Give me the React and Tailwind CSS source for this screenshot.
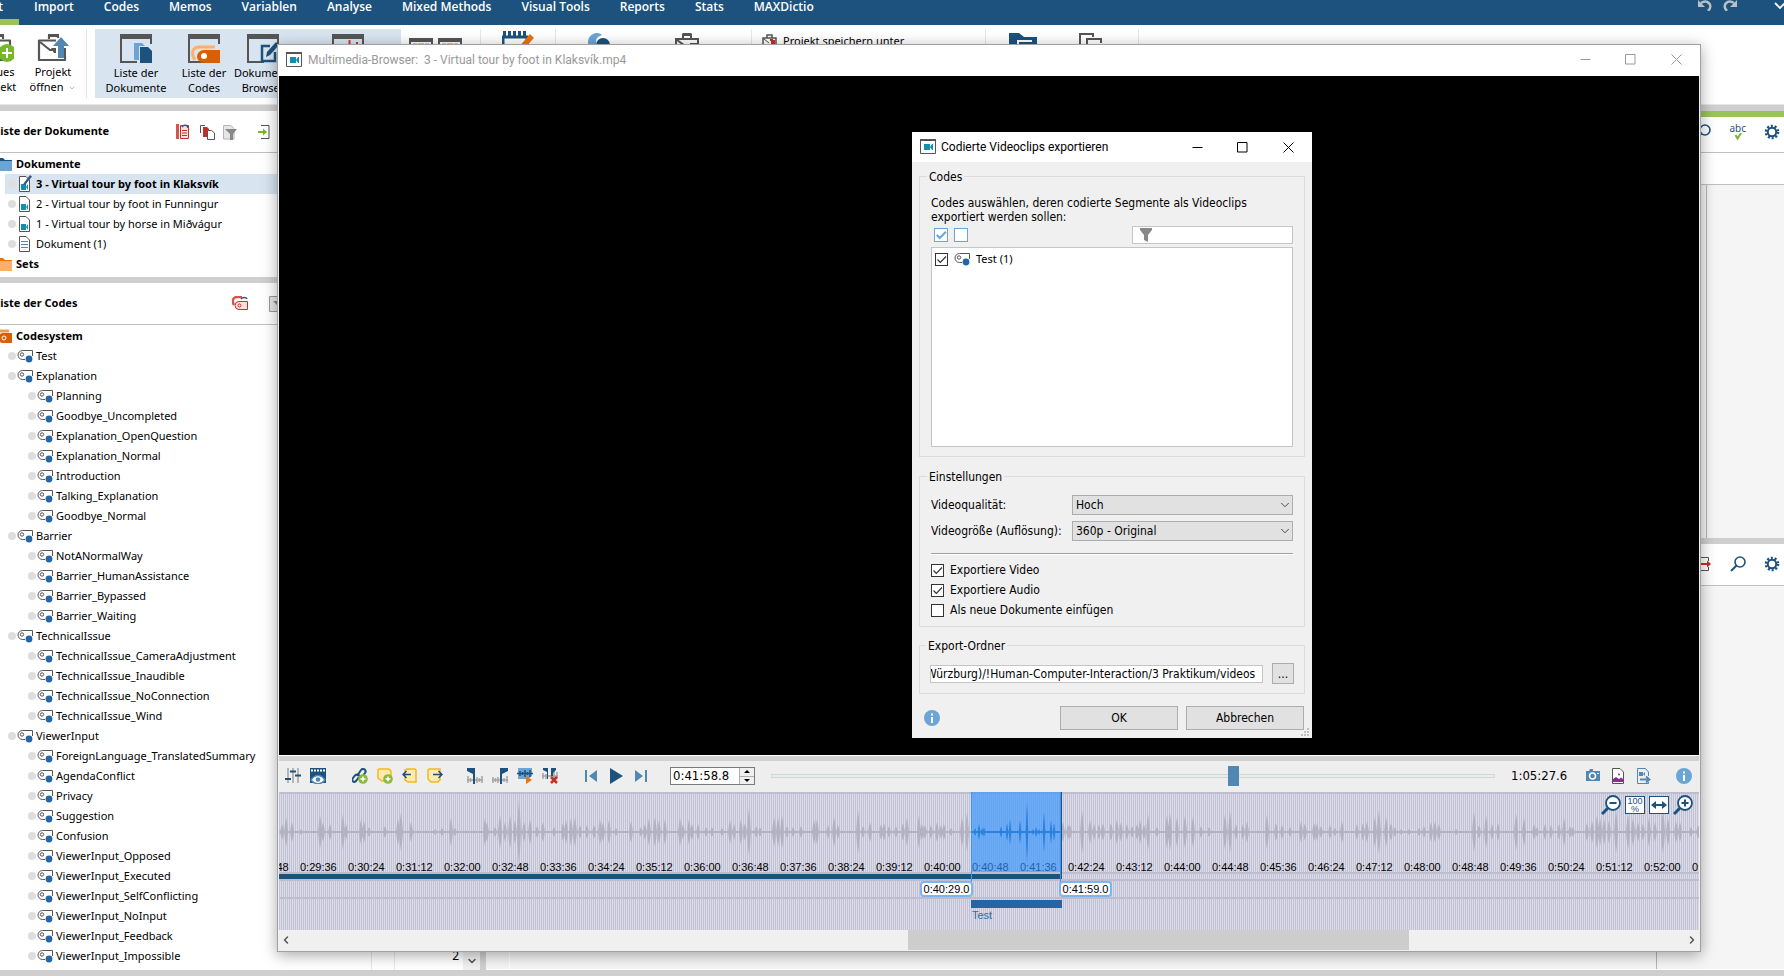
import { useState } from 'react';
import { ChevronDown, ChevronLeft, ChevronRight } from 'lucide-react';

const MENU = ['Import', 'Codes', 'Memos', 'Variablen', 'Analyse', 'Mixed Methods', 'Visual Tools', 'Reports', 'Stats', 'MAXDictio'];

const CODES = [
  ['Test', 0],
  ['Explanation', 0],
  ['Planning', 1],
  ['Goodbye_Uncompleted', 1],
  ['Explanation_OpenQuestion', 1],
  ['Explanation_Normal', 1],
  ['Introduction', 1],
  ['Talking_Explanation', 1],
  ['Goodbye_Normal', 1],
  ['Barrier', 0],
  ['NotANormalWay', 1],
  ['Barrier_HumanAssistance', 1],
  ['Barrier_Bypassed', 1],
  ['Barrier_Waiting', 1],
  ['TechnicalIssue', 0],
  ['TechnicalIssue_CameraAdjustment', 1],
  ['TechnicalIssue_Inaudible', 1],
  ['TechnicalIssue_NoConnection', 1],
  ['TechnicalIssue_Wind', 1],
  ['ViewerInput', 0],
  ['ForeignLanguage_TranslatedSummary', 1],
  ['AgendaConflict', 1],
  ['Privacy', 1],
  ['Suggestion', 1],
  ['Confusion', 1],
  ['ViewerInput_Opposed', 1],
  ['ViewerInput_Executed', 1],
  ['ViewerInput_SelfConflicting', 1],
  ['ViewerInput_NoInput', 1],
  ['ViewerInput_Feedback', 1],
  ['ViewerInput_Impossible', 1],
];

// [x, half height] of the loud spots in the recording
const PEAKS = [
  [3, 8], [7, 15], [13, 10], [22, 3], [41, 17], [44, 10], [51, 8], [64, 18], [67, 8], [82, 13], [85, 11], [90, 5], [106, 6], [119, 13], [122, 20], [132, 10],
  [156, 3], [163, 4], [172, 14], [176, 4], [206, 14], [208, 10], [216, 5], [221, 17], [226, 10], [231, 17], [236, 12], [240, 33], [245, 10], [251, 13], [258, 6], [264, 10],
  [275, 5], [284, 9], [287, 12], [292, 14], [296, 15], [301, 7], [308, 7], [315, 7], [321, 13], [324, 10], [330, 12], [337, 4], [352, 11], [362, 5], [366, 8], [370, 14],
  [376, 15], [380, 12], [386, 13], [401, 14], [404, 8], [410, 13], [413, 8], [419, 8], [427, 5], [433, 5], [443, 4], [451, 12], [455, 8], [462, 13], [466, 9], [470, 24],
  [477, 6], [481, 5], [495, 15], [499, 15], [503, 17], [508, 6], [514, 5], [522, 6], [535, 12], [538, 13], [549, 7], [555, 15], [559, 7], [579, 22], [584, 6], [591, 10],
  [602, 8], [605, 9], [610, 6], [617, 6], [624, 9], [628, 14], [640, 17], [643, 8], [646, 7], [652, 7], [658, 10], [662, 7], [665, 8], [672, 4], [683, 15], [688, 20],
  [784, 10], [789, 8], [791, 7], [803, 22], [811, 12], [815, 8], [820, 8], [824, 9], [832, 9], [838, 13], [842, 10], [848, 8], [853, 6], [858, 8], [861, 12], [865, 7], [869, 18],
  [878, 5], [888, 17], [891, 19], [898, 15], [906, 17], [914, 16], [922, 6], [930, 5], [946, 18], [951, 21], [957, 8], [964, 8], [968, 11], [988, 18], [997, 9], [1003, 7], [1011, 5],
  [1022, 11], [1026, 9], [1035, 9], [1038, 9], [1042, 6], [1051, 7], [1056, 4], [1063, 11], [1078, 8], [1084, 9], [1088, 11], [1096, 16], [1100, 22], [1107, 15], [1112, 9], [1116, 5],
  [1122, 3], [1130, 3], [1140, 4], [1145, 6], [1152, 10], [1156, 11], [1160, 8], [1177, 3], [1195, 21], [1200, 7], [1207, 17], [1213, 8], [1219, 9], [1237, 19], [1245, 14],
  [1255, 8], [1258, 5], [1266, 8], [1272, 7], [1280, 8], [1285, 14], [1291, 6], [1294, 5], [1308, 9], [1313, 11], [1318, 17], [1321, 14], [1325, 13], [1330, 12], [1337, 22], [1349, 18],
  [1354, 14], [1359, 10], [1364, 9], [1370, 15], [1376, 10], [1384, 22], [1389, 14], [1397, 11], [1401, 10], [1412, 5], [1419, 7],
];
const SELECTED_PEAKS = [[4, 4], [8, 8], [11, 4], [13, 5], [30, 6], [36, 9], [39, 13], [49, 12], [56, 30], [62, 3], [65, 5], [68, 3], [73, 20], [80, 12], [83, 9]];

const TIMES = Array.from({ length: 31 }, (_, i) => {
  const s = 28 * 60 + 48 + i * 48;
  const pad = n => String(n).padStart(2, '0');
  return `0:${pad(Math.floor(s / 60))}:${pad(s % 60)}`;
});

const wavePath = (peaks, mid, w) =>
  peaks.map(([x, a]) => `M${x - w} ${mid}L${x - w / 2} ${mid - a * 0.6}L${x} ${mid - a}L${x + w / 2} ${mid - a * 0.6}L${x + w} ${mid}L${x + w / 2} ${mid + a * 0.6}L${x} ${mid + a}L${x - w / 2} ${mid + a * 0.6}Z`).join('');

const Svg = ({ w = 16, h = 16, className = '', children }) => (
  <svg width={w} height={h} viewBox={`0 0 ${w} ${h}`} fill="none" className={`shrink-0 ${className}`} aria-hidden="true">{children}</svg>
);

const CodeIcon = () => (
  <Svg w={16} h={14}>
    <path d="M15.500 7V1.500H5.500a4.500 4.500 0 0 0 0 9H8" stroke="#555" />
    <circle cx="5" cy="5.500" r="1.700" stroke="#555" />
    <circle cx="12" cy="10" r="3.400" fill="#2465a5" />
  </Svg>
);

const VideoWindowIcon = () => (
  <Svg>
    <path d="M.5.500h15v14H.5z" fill="#fff" stroke="#555" />
    <path d="M0 0h16v2H0z" fill="#555" />
    <path d="M4 5h6v6H4zM10 8l2-3h1v6h-1z" fill="#128fb0" />
  </Svg>
);

const DocIcon = ({ kind }) => (
  <Svg w={14} h={18}>
    <path d="M1.500 1.500h6.500l3.500 3.500v11.500h-10z" fill="#fff" stroke="#555" />
    {kind === 'text' ? (
      <path d="M3 6.500h7M3 9.500h7M3 12.500h7" stroke="#5087b3" />
    ) : (
      <path d="M3 9h5v6H3zM8 12l2-3v6z" fill="#128fb0" />
    )}
    {kind === 'edit' && <path d="M5.500 8.500L12 0l2 1.500L7.500 9.500l-2 .5z" fill="#35568c" />}
  </Svg>
);

const FolderIcon = ({ orange }) => (
  <Svg w={16} h={14}>
    <path d="M0 1h7l2 2h7v3H0z" fill={orange ? '#e8760c' : '#1c527d'} />
    <path d="M0 4h16v10H0z" fill={orange ? '#ffb066' : '#6ba5d6'} />
  </Svg>
);

const SearchIcon = () => (
  <Svg>
    <circle cx="10" cy="6" r="5" stroke="#1c527d" strokeWidth="1.600" />
    <path d="M6.500 9.500L1 15" stroke="#1c527d" strokeWidth="2" />
  </Svg>
);

const GearIcon = () => (
  <Svg>
    <circle cx="8" cy="8" r="4.200" stroke="#1c527d" strokeWidth="2" />
    <circle cx="8" cy="8" r="6" stroke="#1c527d" strokeWidth="2.600" strokeDasharray="2 1.770" />
  </Svg>
);

const InfoIcon = () => (
  <Svg>
    <circle cx="8" cy="8" r="8" fill="#6ba5d6" />
    <path d="M7 3.500h2v2H7zM7 7h2v6H7z" fill="#fff" />
  </Svg>
);

const CaseIcon = ({ children }) => (
  <Svg w={32} h={28}>
    <path d="M12 5V1.500h9V5M2 26V6.500h26V26z" stroke="#555" strokeWidth="2.200" strokeLinejoin="round" fill="#fff" />
    <path d="M11 0h11v3H11z" fill="#555" />
    <path d="M3 8l10 8h5" stroke="#555" strokeWidth="2" />
    <path d="M14 14h5v5h-2z" fill="#555" />
    {children}
  </Svg>
);

const PaneIcon = ({ children }) => (
  <Svg w={32} h={29}>
    <path d="M31 10V1H1v27h16" stroke="#555" strokeWidth="2" />
    <path d="M0 2a2 2 0 0 1 2-2h28a2 2 0 0 1 2 2v3H0z" fill="#555" />
    {children}
  </Svg>
);

const IconButton = ({ label, children, className = '' }) => (
  <button type="button" aria-label={label} className={`flex shrink-0 items-center justify-center ${className}`}>{children}</button>
);

const RibbonButton = ({ icon, lines, className }) => (
  <button type="button" className={`flex shrink-0 flex-col items-center gap-[2px] pt-[5px] whitespace-nowrap ${className}`}>
    {icon}
    <span className="text-center text-[11px] leading-[15px]">{lines[0]}<br />{lines[1]}</span>
  </button>
);

const RibbonLine = ({ className }) => <div className={`w-px shrink-0 bg-gray-200 ${className}`} />;

const TreeRow = ({ level = 0, icon, label, bold, selected }) => (
  <li className={`flex h-5 items-center ${level ? 'pl-[28px]' : 'pl-[8px]'} ${selected ? 'bg-[linear-gradient(to_right,white_5px,#d8e4f0_5px)]' : ''}`}>
    <span className="mr-[1px] size-2 shrink-0 rounded-full bg-[#dedede]" />
    {icon}
    <span className={`ml-[3px] whitespace-nowrap ${bold ? 'font-bold' : ''}`}>{label}</span>
  </li>
);

const Check = ({ id, label, defaultChecked, tone = 'dark' }) => (
  <span className="relative flex shrink-0">
    <input
      id={id}
      type="checkbox"
      aria-label={label}
      defaultChecked={defaultChecked}
      className={`peer appearance-none border bg-white ${tone === 'blue' ? 'size-[14px] border-[#6ba5d6]' : 'size-[13px] border-[#333]'}`}
    />
    <svg viewBox="0 0 13 13" className={`pointer-events-none absolute inset-0 hidden peer-checked:block ${tone === 'blue' ? 'text-[#6ba5d6]' : 'text-[#333]'}`} fill="none" stroke="currentColor" strokeWidth={tone === 'blue' ? 1.8 : 1.2}>
      <path d="M2.500 6.500l2.800 2.800L11 3.500" />
    </svg>
  </span>
);

const Select = ({ id, options }) => (
  <span className="relative w-[221px] shrink-0">
    <select id={id} className="block h-5 w-full appearance-none border border-[#adadad] bg-[#e1e1e1] pl-[3px] text-[12px]">
      {options.map(o => <option key={o}>{o}</option>)}
    </select>
    <ChevronDown size={14} strokeWidth={1.5} className="pointer-events-none absolute top-[3px] right-[1px] text-[#333]" />
  </span>
);

const WindowButtons = () => (
  <div className="flex items-center">
    <IconButton label="Minimieren" className="h-6 w-[45px]"><Svg w={11} h={11}><path d="M.5 5.500h10" stroke="currentColor" /></Svg></IconButton>
    <IconButton label="Maximieren" className="h-6 w-[45px]"><Svg w={11} h={11}><path d="M.5.500h9.500v9.500H.5z" stroke="currentColor" /></Svg></IconButton>
    <IconButton label="Schließen" className="h-6 w-[47px]"><Svg w={11} h={11}><path d="M.5.500l10 10M10.500.500l-10 10" stroke="currentColor" /></Svg></IconButton>
  </div>
);

const Ribbon = () => (
  <div className="flex h-20 shrink-0 items-stretch overflow-hidden border-b border-gray-200 pt-1 pb-[6px]">
    <RibbonButton
      className="-ml-[22px] w-10"
      lines={['Neues', 'Projekt']}
      icon={<CaseIcon><circle cx="25" cy="19" r="9" fill="#76b82a" /><path d="M25 14v10M20 19h10" stroke="#fff" strokeWidth="2" /></CaseIcon>}
    />
    <RibbonButton
      className="w-[68px] pl-[2px]"
      lines={['Projekt', <span key="o">öffnen <ChevronDown size={8} strokeWidth={1.5} className="ml-[2px] inline text-gray-500" /></span>]}
      icon={<CaseIcon><path d="M19 4h12v18H19z" fill="#fff" /><path d="M21 24V12h-5l8-9 8 9h-5v12z" fill="#5087b3" /><path d="M28 14v12" stroke="#555" strokeWidth="2" /></CaseIcon>}
    />
    <RibbonLine />
    <div className="ml-2 flex w-[306px] shrink-0 bg-[#d8e4f0]">
      <RibbonButton
        className="w-[82px]"
        lines={['Liste der', 'Dokumente']}
        icon={<PaneIcon><path d="M14 9h8l3 3v14H14z" fill="#6ba5d6" /><path d="M19 12h10l4 4v14H19z" fill="#d8e4f0" /><path d="M20 13h8l4 4v12H20z" fill="#1c527d" /></PaneIcon>}
      />
      <RibbonButton
        className="w-[54px]"
        lines={['Liste der', 'Codes']}
        icon={<PaneIcon><path d="M7 26c-5-8-2-13 5-13h15" stroke="#ffb066" strokeWidth="3" /><path d="M32 16H16a7 6.500 0 0 0 0 13h16z" fill="#d95f02" /><circle cx="16" cy="22" r="3" fill="#fff" /></PaneIcon>}
      />
      <RibbonButton
        className="w-16"
        lines={['Dokument-', 'Browser']}
        icon={<PaneIcon><path d="M23 12h-8v15h13V18" stroke="#1c527d" strokeWidth="2.500" /><path d="M19 23l1-5L29 8l3 3-9 10z" fill="#1c527d" /></PaneIcon>}
      />
      <RibbonButton
        className="w-[106px]"
        lines={['Multimedia-', 'Browser']}
        icon={<PaneIcon><path d="M14 14h6M17.500 6v12M25 8v12" stroke="#d8372b" strokeWidth="2" /></PaneIcon>}
      />
    </div>
    <div className="mt-[9px] ml-2 flex gap-[5px]">
      {['a', 'b'].map(k => (
        <Svg key={k} w={24} h={20}>
          <path d="M1 1h22v18H1z" stroke="#555" strokeWidth="2" fill="#fff" />
          <path d="M0 0h24v4H0z" fill="#555" />
          <path d="M4 6.500h4M16 6.500h4" stroke="#6ba5d6" strokeWidth="2" />
          <path d="M9 6.500h6" stroke="#e8760c" strokeWidth="2" />
        </Svg>
      ))}
    </div>
    <RibbonLine className="ml-[18px]" />
    <Svg w={32} h={28} className="mt-[2px] ml-[21px]">
      <path d="M1 26V6h24v20z" stroke="#1c527d" strokeWidth="3" />
      <path d="M2.500 0v6M7.500 0v6M12.500 0v6M17.500 0v6M22.500 0v6" stroke="#1c527d" strokeWidth="3" />
      <path d="M16 17L28 3l4 4-13 14z" fill="#e8760c" />
    </Svg>
    <RibbonLine className="ml-[21px]" />
    <Svg w={24} h={28} className="mt-1 ml-[32px]">
      <path d="M10 0a9 9 0 0 0-2 18V8c0-3 3-5 6-6-1-1-3-2-4-2z" fill="#6ba5d6" />
      <circle cx="15" cy="12" r="7" fill="#1c527d" />
    </Svg>
    <div className="ml-[63px] pt-1">
      <Svg w={26} h={28}>
        <path d="M8 5V1.500h8V5M1 26V6h22v20z" stroke="#555" strokeWidth="2" />
        <path d="M8 0h8v3H8z" fill="#555" />
        <path d="M2 7l7 5h6" stroke="#555" strokeWidth="2" />
        <path d="M15 10h9v8h-9z" fill="#555" />
      </Svg>
    </div>
    <RibbonLine className="ml-[50px]" />
    <button type="button" className="ml-[10px] flex h-[21px] shrink-0 items-end gap-[5px] self-start text-[11px] leading-[18px] whitespace-nowrap">
      <Svg>
        <path d="M5 4V1h5v3M1 15V4h13v11z" stroke="#555" strokeWidth="1.500" />
        <path d="M2 5l5 4" stroke="#555" />
        <path d="M8 6h2v8M12 6v9" stroke="#c52f24" strokeWidth="2" />
      </Svg>
      Projekt speichern unter
    </button>
    <RibbonLine className="ml-[81px]" />
    <Svg w={28} h={28} className="mt-1 ml-[23px]">
      <path d="M0 0h10l5 4h13v24H0z" fill="#1c527d" />
      <path d="M9 15V8h14" stroke="#fff" strokeWidth="2" />
    </Svg>
    <Svg w={24} h={28} className="mt-1 ml-[42px]">
      <path d="M1 18V1h13v3M8 22V6h14v4" stroke="#555" strokeWidth="2" />
      <path d="M20 12h4v6h-4z" fill="#c52f24" />
    </Svg>
    <RibbonLine className="ml-[35px]" />
  </div>
);

const LeftPanels = () => (
  <div className="flex w-[480px] shrink-0 flex-col bg-white">
    <section>
      <header className="flex h-[42px] items-center border-b border-[#c0c0c0]">
        <h2 className="-ml-[6px] w-[182px] text-[11px] font-bold whitespace-nowrap">Liste der Dokumente</h2>
        <div className="flex gap-[7px]">
          <IconButton label="Aktivierung zurücksetzen">
            <Svg>
              <path d="M0 0h3v15H0z" fill="#d9534a" />
              <path d="M4.500 1.500h8v13h-8z" stroke="#c52f24" fill="#fbe0dd" />
              <path d="M6 6.500h5M6 9h5M6 11.500h5" stroke="#c52f24" />
              <path d="M6 3c2-3 6-2 6 1" stroke="#35568c" strokeWidth="1.500" />
            </Svg>
          </IconButton>
          <IconButton label="Aktivierte Dokumente">
            <Svg>
              <path d="M1.500 9V1.500H6" stroke="#555" />
              <path d="M4 3h4l2 2v8H4z" fill="#c52f24" />
              <path d="M8.500 6.500h4L15.500 9v6.500h-7z" fill="#fff" stroke="#555" />
            </Svg>
          </IconButton>
          <IconButton label="Filter">
            <Svg>
              <path d="M1.500 1.500H9l3 3v10.500H1.500z" fill="#e6e6e6" stroke="#b5b5b5" />
              <path d="M3 5h12l-4 5v6H8v-6z" fill="#888" />
            </Svg>
          </IconButton>
          <IconButton label="Importieren" className="ml-3">
            <Svg>
              <path d="M4 1.500h8v13H4" stroke="#555" />
              <path d="M1 8h6" stroke="#76b82a" strokeWidth="2" />
              <path d="M6 4.500L10 8l-4 3.500z" fill="#76b82a" />
            </Svg>
          </IconButton>
        </div>
      </header>
      <ul className="h-[124px] pt-[1px] text-[11px]">
        <li className="-ml-[4px] flex h-5 items-center gap-1 font-bold"><FolderIcon />Dokumente</li>
        <TreeRow icon={<span className="mx-[1px] flex"><DocIcon kind="edit" /></span>} label="3 - Virtual tour by foot in Klaksvík" bold selected />
        <TreeRow icon={<span className="mx-[1px] flex"><DocIcon /></span>} label="2 - Virtual tour by foot in Funningur" />
        <TreeRow icon={<span className="mx-[1px] flex"><DocIcon /></span>} label="1 - Virtual tour by horse in Miðvágur" />
        <TreeRow icon={<span className="mx-[1px] flex"><DocIcon kind="text" /></span>} label="Dokument (1)" />
        <li className="-ml-[4px] flex h-5 items-center gap-1 font-bold"><FolderIcon orange />Sets</li>
      </ul>
    </section>
    <div className="h-[6px] shrink-0 bg-[#cfcfcf]" />
    <section className="flex min-h-0 flex-1 flex-col">
      <header className="flex h-[42px] shrink-0 items-center border-b border-[#c0c0c0]">
        <h2 className="-ml-[6px] w-[238px] text-[11px] font-bold whitespace-nowrap">Liste der Codes</h2>
        <IconButton label="Codes zurücksetzen">
          <Svg w={17}>
            <path d="M2 9C-1 4 2 1 5 1h5" stroke="#d9534a" strokeWidth="2.500" />
            <path d="M15.500 5.500H7a4 4 0 0 0 0 8h8.500z" fill="#fbe0dd" stroke="#c52f24" />
            <circle cx="7.500" cy="9.500" r="1.500" stroke="#c52f24" />
            <path d="M9 3c2-2 5-2 6 0" stroke="#35568c" strokeWidth="1.500" />
          </Svg>
        </IconButton>
        <IconButton label="Codes filtern" className="ml-5">
          <Svg>
            <path d="M.5.500h14v15H.5z" fill="#e6e6e6" stroke="#999" />
            <path d="M4 5h12l-4 5v6H9v-6z" fill="#888" />
          </Svg>
        </IconButton>
      </header>
      <div className="flex min-h-0 flex-1">
        <ul className="min-w-0 flex-1 overflow-hidden pt-[1px] text-[11px]">
          <li className="-ml-[4px] flex h-5 items-center gap-1 font-bold">
            <Svg>
              <path d="M3 3h10" stroke="#f59a4a" strokeWidth="3" />
              <path d="M17 5H7a5 5 0 0 0 0 10h10z" fill="#d95f02" />
              <circle cx="8" cy="10" r="2" stroke="#fff" />
            </Svg>
            Codesystem
          </li>
          {CODES.map(([label, level]) => <TreeRow key={label} level={level} icon={<CodeIcon />} label={label} />)}
        </ul>
        <div className="w-6 shrink-0 border-x border-gray-200" />
        <div className="flex w-[68px] shrink-0 items-end justify-end pr-1 pb-[6px] text-[12px] leading-4">2</div>
        <div className="flex w-[17px] shrink-0 items-end justify-center bg-[#f0f0f0] pb-[3px]"><ChevronDown size={12} strokeWidth={3} className="text-[#555]" /></div>
      </div>
    </section>
  </div>
);

const RightPanels = () => (
  <div className="flex min-w-0 flex-1 flex-col bg-[#f5f5f5]">
    <section className="flex h-[427px] shrink-0 flex-col">
      <div className="h-[6px] shrink-0 bg-[#9ac45a]" />
      <header className="flex h-9 shrink-0 items-center justify-end gap-[18px] border-b border-[#c0c0c0] bg-white pr-1 pb-[5px]">
        <IconButton label="Suchen"><SearchIcon /></IconButton>
        <IconButton label="Rechtschreibung" className="flex-col">
          <span className="h-[9px] text-[10px] leading-[8px] text-[#1c527d]">abc</span>
          <Svg h={7}><path d="M5.500 2l2 3.500L11 0" stroke="#76b82a" strokeWidth="2" /></Svg>
        </IconButton>
        <IconButton label="Einstellungen"><GearIcon /></IconButton>
      </header>
      <div className="h-8 shrink-0 border-b border-[#c0c0c0] bg-white" />
      <div className="ml-auto w-[78px] flex-1 border-l border-[#b5b5b5]" />
    </section>
    <div className="h-[6px] shrink-0 bg-[#cfcfcf]" />
    <header className="flex h-[42px] shrink-0 items-center justify-end gap-[18px] border-b border-[#c0c0c0] bg-white pr-1 pb-[2px]">
      <IconButton label="Exportieren">
        <Svg>
          <path d="M4 1.500h8.500V5M12.500 11v3.500H4" stroke="#555" />
          <path d="M4 8h7" stroke="#c52f24" strokeWidth="2" />
          <path d="M11 4.500L15 8l-4 3.500z" fill="#c52f24" />
        </Svg>
      </IconButton>
      <IconButton label="Suchen"><SearchIcon /></IconButton>
      <IconButton label="Einstellungen"><GearIcon /></IconButton>
    </header>
    <div className="flex flex-1 justify-between border-b border-white">
      <div className="w-6 border-r border-white" />
      <div className="w-[128px] border-l border-[#b5b5b5]" />
    </div>
  </div>
);

const YELLOW = { fill: '#ffeab0', stroke: '#f5b921', strokeWidth: 1.5 };
const Plus = ({ cx, cy }) => (
  <g>
    <circle cx={cx} cy={cy} r="4.800" fill="#8bb93c" />
    <path d={`M${cx - 2.5} ${cy}h5M${cx} ${cy - 2.5}v5`} stroke="#fff" strokeWidth="1.500" />
  </g>
);

const PlayerBar = () => {
  const [pos, setPos] = useState(641);
  return (
    <div className="flex h-[31px] shrink-0 items-center bg-[#eee] pr-[7px] pb-px pl-[6px] font-['DejaVu_Sans_Condensed','DejaVu_Sans',sans-serif]">
      <div className="flex gap-[9px]">
        <IconButton label="Regler">
          <Svg>
            <path d="M3 0v15M8 0v15M13 0v15" stroke="#b5b5b5" strokeWidth="2" />
            <path d="M0 11h6M5 3.500h6M10 7.500h6" stroke="#1c527d" strokeWidth="2" />
          </Svg>
        </IconButton>
        <IconButton label="Video anzeigen">
          <Svg>
            <path d="M0 0h16v15H0z" fill="#1c527d" />
            <path d="M1 2.500h14" stroke="#fff" strokeWidth="2" strokeDasharray="2 1" />
            <path d="M1 12c4-6 10-6 14 0-4 5-10 5-14 0z" fill="#fff" stroke="#5087b3" strokeWidth="1.500" />
            <circle cx="8" cy="11.500" r="2.300" fill="#5087b3" />
          </Svg>
        </IconButton>
      </div>
      <div className="ml-[26px] flex gap-[9px]">
        <IconButton label="Link einfügen">
          <Svg>
            <path d="M5 8l4-6c2-2.500 6 0 4 3l-1.500 2M7 9l-3 4c-2 2-5 0-3-3l2-2.500c2-2 5-.5 5 1.500" stroke="#1c527d" strokeWidth="2" />
            <Plus cx={11} cy={11} />
          </Svg>
        </IconButton>
        <IconButton label="Memo einfügen">
          <Svg><path d="M2 1h10l2 2v8l-3 2H5L1 10V2z" {...YELLOW} /><Plus cx={11} cy={11} /></Svg>
        </IconButton>
        <IconButton label="Vorheriges Memo">
          <Svg><path d="M5 1h8l1 1v12H6l-3-2V2z" {...YELLOW} /><path d="M9 6.500H1.500M4.500 3l-3.500 3.500L4.500 10" stroke="#1c527d" strokeWidth="1.500" /></Svg>
        </IconButton>
        <IconButton label="Nächstes Memo">
          <Svg><path d="M2 1h11v11l-2 2H4l-3-3V2z" {...YELLOW} /><path d="M6 6.500h8.500M11.500 3L15 6.500 11.500 10" stroke="#1c527d" strokeWidth="1.500" /></Svg>
        </IconButton>
      </div>
      <div className="ml-6 flex gap-[9px]">
        <IconButton label="Clipanfang">
          <Svg><path d="M1 8v7M3.500 10v4M10 9v6M12.500 10v4M15 8v7M0 12h16" stroke="#a5a5a5" strokeWidth="1.500" /><path d="M0 0h8v16H6V6L0 3z" fill="#1c527d" /></Svg>
        </IconButton>
        <IconButton label="Clipende">
          <Svg><path d="M1 9v6M3.500 10v4M6 9v6M12 10v4M15 8v7M0 12h16" stroke="#a5a5a5" strokeWidth="1.500" /><path d="M16 0H8v16h2V6l6-3z" fill="#1c527d" /></Svg>
        </IconButton>
        <IconButton label="Clip abspielen">
          <Svg><path d="M1 0h14v8l-4 3H1z" fill="#6ba5d6" /><path d="M0 5.500h16M3 3v5M5.500 4v3M8 2v7M10.500 4v3M13 2v7" stroke="#1c527d" strokeWidth="1.500" /><path d="M9 8l6 4-6 4z" fill="#e8760c" /></Svg>
        </IconButton>
        <IconButton label="Clip löschen">
          <Svg><path d="M1 5v6M4 6v5M12 3v7M15 4v6M0 8h16" stroke="#a5a5a5" strokeWidth="1.500" /><path d="M1 0h5v11H5V4L1 2zM14 0H9v8h2V5l3-3z" fill="#1c527d" /><path d="M9 9l6 6M15 9l-6 6" stroke="#c52f24" strokeWidth="2.500" /></Svg>
        </IconButton>
      </div>
      <div className="ml-[26px] flex gap-[9px]">
        <IconButton label="Zurück"><Svg><path d="M1 2h2v12H1zM13 2v12L5 8z" fill="#5087b3" /></Svg></IconButton>
        <IconButton label="Abspielen"><Svg><path d="M1 0l13 8L1 16z" fill="#1c527d" /></Svg></IconButton>
        <IconButton label="Vor"><Svg><path d="M11 2h2v12h-2zM1 2v12l8-6z" fill="#5087b3" /></Svg></IconButton>
      </div>
      <div className="ml-5 flex h-[18px] w-[85px] shrink-0 border border-[#7a7a7a] bg-white">
        <input aria-label="Position" defaultValue="0:41:58.8" className="w-[68px] bg-transparent pl-[2px] text-[13px] leading-4 outline-none" />
        <div className="flex flex-1 flex-col divide-y divide-[#adadad] border-l border-[#adadad] bg-[#f0f0f0]">
          <IconButton label="Höher" className="flex-1"><Svg w={6} h={3}><path d="M0 3l3-3 3 3z" fill="#000" /></Svg></IconButton>
          <IconButton label="Niedriger" className="flex-1"><Svg w={6} h={3}><path d="M0 0l3 3 3-3z" fill="#000" /></Svg></IconButton>
        </div>
      </div>
      <input
        type="range"
        aria-label="Zeitachse"
        min="0"
        max="1000"
        value={pos}
        onChange={e => setPos(Number(e.target.value))}
        className="mx-4 h-5 min-w-0 flex-1 appearance-none bg-transparent [&::-webkit-slider-runnable-track]:h-1 [&::-webkit-slider-runnable-track]:border [&::-webkit-slider-runnable-track]:border-[#d3d8d5] [&::-webkit-slider-runnable-track]:bg-[#e8ecea] [&::-webkit-slider-thumb]:-mt-[9px] [&::-webkit-slider-thumb]:h-5 [&::-webkit-slider-thumb]:w-[11px] [&::-webkit-slider-thumb]:appearance-none [&::-webkit-slider-thumb]:bg-[#5087b3]"
      />
      <span className="w-[74px] text-[13px]">1:05:27.6</span>
      <div className="flex gap-[9px]">
        <IconButton label="Standbild"><Svg><path d="M1 3h3l1-2h3v2h7v10H1z" fill="#5087b3" /><circle cx="7.500" cy="8" r="3" stroke="#fff" strokeWidth="1.500" /><path d="M12 5h2v1h-2z" fill="#fff" /></Svg></IconButton>
        <IconButton label="Bild einfügen"><Svg><path d="M2.500.500H10L13.500 4v11.500h-11z" fill="#fff" stroke="#555" /><path d="M3 14v-3l3-2 3 2 2-1.500 2 1.500v3z" fill="#8a2f8f" /><circle cx="9" cy="6.500" r="1" fill="#8a2f8f" /></Svg></IconButton>
        <IconButton label="Clips exportieren"><Svg><path d="M13.500 8V4L10.500.500h-8v15h11V14" stroke="#5087b3" /><path d="M4 4h4v4H4zM8 6l2-2v4z" fill="#5087b3" /><path d="M5 11.500h8M11 8.500l3.500 3-3.500 3" stroke="#5087b3" strokeWidth="1.800" /></Svg></IconButton>
      </div>
      <IconButton label="Info" className="ml-[25px]"><InfoIcon /></IconButton>
    </div>
  );
};

const Timeline = () => (
  <div className="relative h-[138px] shrink-0 overflow-hidden bg-[repeating-linear-gradient(to_right,#c3c2d4_0_1px,#dcdbe8_1px_2px)] font-['Liberation_Sans',Arial,sans-serif] text-[11px] leading-[14px]">
    <div className="absolute inset-x-0 top-0 h-[2px] bg-[#bebdd0]" />
    <div className="absolute inset-x-0 top-[39px] h-[2px] bg-[#b3b2c2]" />
    <svg className="absolute top-0 left-0" width="1421" height="80" fill="#b3b2c2" aria-hidden="true"><path d={wavePath(PEAKS, 40, 2)} /></svg>
    <div className="absolute inset-x-0 top-[80px] h-[9px] border-y-2 border-[#bebdd0]" />
    <div className="absolute inset-x-0 top-[105px] h-[2px] bg-[#bebdd0]" />
    {TIMES.map((t, i) => (
      <span key={t} className="absolute top-[68px] whitespace-nowrap text-black" style={{ left: i * 48 - 27 }}>{t}</span>
    ))}
    <div className="absolute top-[82px] left-0 h-[5px] w-[782px] bg-[#1c527d]" />
    <div className="absolute top-0 left-[692px] h-[80px] w-[90px] bg-[#3393ff]/65" />
    <svg className="absolute top-0 left-[692px]" width="90" height="80" fill="#2b82dc" aria-hidden="true"><path d="M0 39h90v2H0z" /><path d={wavePath(SELECTED_PEAKS, 40, 1.3)} /></svg>
    <div className="absolute top-0 left-[692px] h-[90px] w-px bg-[#3b95f5]" />
    <div className="absolute top-0 left-[781px] h-[90px] w-px bg-[#3b95f5]" />
    <div className="absolute top-0 left-[782px] h-[87px] w-px bg-[#1c527d]" />
    <span className="absolute top-[89px] left-[641px] flex h-4 w-[53px] items-center justify-center rounded-[4px] border-2 border-[#7cb5f2] bg-white">0:40:29.0</span>
    <span className="absolute top-[89px] left-[780px] flex h-4 w-[53px] items-center justify-center rounded-[4px] border-2 border-[#7cb5f2] bg-white">0:41:59.0</span>
    <div className="absolute top-[108px] left-[692px] h-2 w-[91px] bg-[#2465a5]" />
    <span className="absolute top-[116px] left-[693px] text-[#2e6da8]">Test</span>
    <div className="absolute top-[3px] right-[6px] flex gap-1">
      <IconButton label="Verkleinern">
        <Svg w={20} h={20}><path d="M8 12l-7 7" stroke="#1c527d" strokeWidth="3" /><circle cx="12" cy="8" r="7" fill="#fff" stroke="#1c527d" strokeWidth="1.800" /><path d="M8.500 8h7" stroke="#1c527d" strokeWidth="2" /></Svg>
      </IconButton>
      <button type="button" className="flex h-[18px] w-5 flex-col items-center self-center border border-[#1c527d] bg-white text-[9px] leading-[8px] text-[#1c527d]"><span>100</span><span>%</span></button>
      <IconButton label="Einpassen" className="h-[18px] w-5 self-center border border-[#1c527d] bg-white">
        <Svg w={16} h={12}><path d="M3 6h10" stroke="#1c527d" strokeWidth="2" /><path d="M5 2v8L0 6zM11 2v8l5-4z" fill="#1c527d" /></Svg>
      </IconButton>
      <IconButton label="Vergrößern">
        <Svg w={20} h={20}><path d="M8 12l-7 7" stroke="#1c527d" strokeWidth="3" /><circle cx="12" cy="8" r="7" fill="#fff" stroke="#1c527d" strokeWidth="1.800" /><path d="M8.500 8h7M12 4.500v7" stroke="#1c527d" strokeWidth="2" /></Svg>
      </IconButton>
    </div>
  </div>
);

const MediaBrowser = () => (
  <div className="absolute top-[44px] right-[83px] bottom-[24px] left-[277px] flex flex-col border border-[#a0a0a0] bg-[#f0f0f0] px-px pb-px shadow-[0_3px_14px_rgba(0,0,0,0.35)]">
    <div className="-mx-px flex h-[31px] shrink-0 items-center bg-white pb-[2px] pl-2 text-[#999]">
      <VideoWindowIcon />
      <span className="ml-[6px] flex-1 whitespace-pre font-['Roboto',sans-serif] text-[12px]">Multimedia-Browser:  3 - Virtual tour by foot in Klaksvík.mp4</span>
      <WindowButtons />
    </div>
    <div className="min-h-0 flex-1 bg-black" />
    <div className="h-[6px] shrink-0 border-t border-white bg-[#d0d0d0]" />
    <PlayerBar />
    <Timeline />
    <div className="flex h-5 shrink-0 items-stretch bg-[#f0f0f0]">
      <IconButton label="Nach links" className="w-[14px]"><ChevronLeft size={12} strokeWidth={3} className="text-[#555]" /></IconButton>
      <div className="relative flex-1"><div className="absolute inset-y-0 left-[44.2%] w-[36%] bg-[#cdcdcd]" /></div>
      <IconButton label="Nach rechts" className="w-[14px]"><ChevronRight size={12} strokeWidth={3} className="text-[#555]" /></IconButton>
    </div>
  </div>
);

const Group = ({ title, className, children }) => (
  <fieldset className={`border border-[#dcdcdc] ${className}`}>
    <legend className="-ml-1 px-[2px] pt-[2px]">{title}</legend>
    {children}
  </fieldset>
);

const ExportDialog = () => (
  <div className="absolute top-[132px] left-[912px] w-[400px] bg-[#f0f0f0] font-['DejaVu_Sans_Condensed','DejaVu_Sans',sans-serif] text-[12px] leading-[14px]" role="dialog" aria-label="Codierte Videoclips exportieren">
    <div className="flex h-[30px] items-center bg-white pl-2">
      <VideoWindowIcon />
      <span className="ml-[5px] flex-1 font-['Roboto',sans-serif]">Codierte Videoclips exportieren</span>
      <WindowButtons />
    </div>
    <div className="px-[7px] pt-[6px]">
      <Group title="Codes" className="px-[11px] pt-3 pb-[9px]">
        <p>Codes auswählen, deren codierte Segmente als Videoclips<br />exportiert werden sollen:</p>
        <div className="mt-[2px] flex h-[18px] items-center gap-[6px] pl-[3px]">
          <Check label="Alle auswählen" tone="blue" defaultChecked />
          <Check label="Alle abwählen" tone="blue" />
          <label className="ml-auto flex h-[18px] w-[161px] items-center border border-[#c5c5c5] bg-white pl-[7px]">
            <Svg w={12} h={14}><path d="M0 0h12v2L8 7v7l-4-2V7L0 2z" fill="#888" /></Svg>
            <input aria-label="Codes filtern" className="min-w-0 flex-1 bg-transparent px-1 outline-none" />
          </label>
        </div>
        <ul className="mt-[3px] h-[200px] border border-[#c5c5c5] bg-white pt-[3px] pl-[3px]">
          <li className="flex h-4 items-center">
            <Check id="code-test" defaultChecked />
            <label htmlFor="code-test" className="ml-[6px] flex items-center gap-[6px] font-['Noto_Sans',sans-serif] text-[11px]"><CodeIcon />Test (1)</label>
          </li>
        </ul>
      </Group>
      <Group title="Einstellungen" className="mt-[11px] px-[11px] pt-[11px] pb-[6px]">
        <div className="flex items-center justify-between"><label htmlFor="quality">Videoqualität:</label><Select id="quality" options={['Hoch', 'Mittel', 'Niedrig']} /></div>
        <div className="mt-[6px] flex items-center justify-between"><label htmlFor="size">Videogröße (Auflösung):</label><Select id="size" options={['360p - Original', '240p']} /></div>
        <hr className="mt-3 mb-[5px] h-[2px] border-t border-b border-t-[#a0a0a0] border-b-white" />
        {[['video', 'Exportiere Video', true], ['audio', 'Exportiere Audio', true], ['insert', 'Als neue Dokumente einfügen', false]].map(([id, label, on]) => (
          <div key={id} className="flex h-5 items-center gap-[6px]"><Check id={id} defaultChecked={on} /><label htmlFor={id}>{label}</label></div>
        ))}
      </Group>
      <Group title="Export-Ordner" className="mt-[10px] px-[10px] pt-[10px] pb-[9px]">
        <div className="flex items-center justify-between">
          <input aria-label="Export-Ordner" defaultValue="Würzburg)/!Human-Computer-Interaction/3 Praktikum/videos" className="h-[18px] w-[333px] border border-[#c5c5c5] bg-white -indent-[5px] outline-none" />
          <button type="button" className="h-[21px] w-[22px] border border-[#adadad] bg-[#e1e1e1]">...</button>
        </div>
      </Group>
    </div>
    <div className="mt-3 flex items-center gap-2 pr-2 pb-2 pl-3">
      <IconButton label="Hilfe" className="mr-auto"><InfoIcon /></IconButton>
      <button type="button" className="h-6 w-[118px] border border-[#adadad] bg-[#e1e1e1]">OK</button>
      <button type="button" className="h-6 w-[118px] border border-[#adadad] bg-[#e1e1e1]">Abbrechen</button>
    </div>
    <Svg w={8} h={8} className="absolute right-[3px] bottom-[2px]"><path d="M6 0h2v2H6zM3 3h2v2H3zM6 3h2v2H6zM0 6h2v2H0zM3 6h2v2H3zM6 6h2v2H6z" fill="#bfbfbf" /></Svg>
  </div>
);

export default function App() {
  return (
    <div className="relative flex h-screen flex-col overflow-hidden bg-white font-['Noto_Sans',sans-serif] text-[11px] text-black">
      <nav className="flex h-[25px] shrink-0 items-start justify-between bg-[#1c527d] font-['Open_Sans',sans-serif] text-[12px] leading-[13px] font-semibold text-white">
        <div className="flex h-full items-start gap-[30px]">
          <a href="#start" className="-mr-[15px] flex h-full w-[19px] justify-end border-b-[6px] border-[#9ac45a] pr-4">Start</a>
          {MENU.map(m => <a key={m} href={`#${m}`} className="whitespace-nowrap">{m}</a>)}
        </div>
        <div className="flex">
          <IconButton label="Rückgängig"><Svg w={14} h={11}><path d="M3 3c6-4 13 2 7 8" stroke="#b9c0c6" strokeWidth="2.500" /><path d="M0 0v7h7z" fill="#b9c0c6" /></Svg></IconButton>
          <IconButton label="Wiederholen" className="ml-[11px]"><Svg w={14} h={11}><path d="M11 3C5-1-2 5 4 11" stroke="#b9c0c6" strokeWidth="2.500" /><path d="M14 0v7H7z" fill="#b9c0c6" /></Svg></IconButton>
          <IconButton label="Menüband" className="-mr-[2px] ml-[37px]"><Svg w={12} h={8}><path d="M1 1l5 5 5-5" stroke="#fff" strokeWidth="1.800" /></Svg></IconButton>
        </div>
      </nav>
      <Ribbon />
      <div className="flex min-h-0 flex-1 flex-col border-y-[6px] border-[#cfcfcf]">
        <div className="flex min-h-0 flex-1 gap-[6px] bg-[#cfcfcf]">
          <LeftPanels />
          <RightPanels />
        </div>
      </div>
      <MediaBrowser />
      <ExportDialog />
    </div>
  );
}
